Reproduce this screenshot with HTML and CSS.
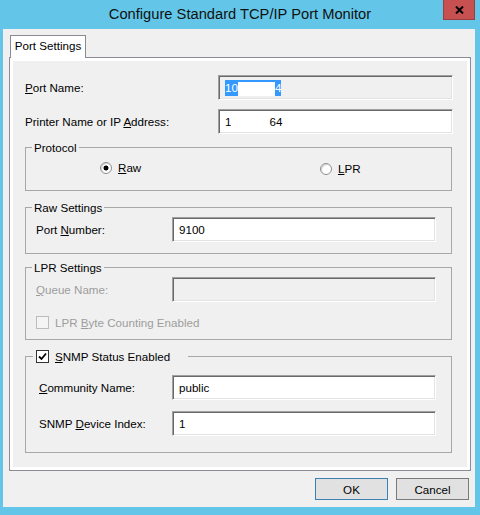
FILE: index.html
```html
<!DOCTYPE html>
<html lang="en">
<head>
  <meta charset="UTF-8">
  <title>Configure Standard TCP/IP Port Monitor</title>
  <link rel="stylesheet" href="styles.css">
</head>
<body>

<div class="window">
  <div class="titlebar">
    <span></span>
    <h1 class="title">Configure Standard TCP/IP Port Monitor</h1>
    <button class="close" aria-label="Close">
      <svg width="9" height="8" viewBox="0 0 9 8"><path d="M1 0.5 L8 7.5 M8 0.5 L1 7.5" stroke="#000" stroke-width="2"/></svg>
    </button>
  </div>

  <div class="client">
    <div class="tabs">
      <div class="tab active">Port Settings</div>
    </div>

    <div class="tab-panel">
      <div class="row first">
        <label class="lbl"><u>P</u>ort Name:</label>
        <div class="field readonly">
          <span class="sel">10<span class="blank"></span>4</span>
        </div>
      </div>
      <div class="row">
        <label class="lbl">Printer Name or IP <u>A</u>ddress:</label>
        <div class="field">1<span class="blank plain"></span>64</div>
      </div>

      <fieldset class="group protocol">
        <legend>Protocol</legend>
        <div class="radios">
          <label class="opt"><span class="radio checked"></span><span><u>R</u>aw</span></label>
          <label class="opt lpr"><span class="radio"></span><span><u>L</u>PR</span></label>
        </div>
      </fieldset>

      <fieldset class="group raw">
        <legend>Raw Settings</legend>
        <div class="grow">
          <label class="lbl">Port <u>N</u>umber:</label>
          <div class="field">9100</div>
        </div>
      </fieldset>

      <fieldset class="group lpr-settings">
        <legend>LPR Settings</legend>
        <div class="grow">
          <label class="lbl disabled"><u>Q</u>ueue Name:</label>
          <div class="field readonly"></div>
        </div>
        <label class="opt check-row disabled"><span class="check"></span><span>LPR <u>B</u>yte Counting Enabled</span></label>
      </fieldset>

      <fieldset class="group snmp">
        <legend>
          <label class="opt">
            <span class="check on">
              <svg width="9" height="9" viewBox="0 0 9 9"><path d="M1 4.5 L3.5 7 L8 1.5" fill="none" stroke="#000" stroke-width="1.8"/></svg>
            </span>
            <span><u>S</u>NMP Status Enabled</span>
          </label>
        </legend>
        <div class="grow">
          <label class="lbl"><u>C</u>ommunity Name:</label>
          <div class="field">public</div>
        </div>
        <div class="grow">
          <label class="lbl">SNMP <u>D</u>evice Index:</label>
          <div class="field">1</div>
        </div>
      </fieldset>
    </div>

    <div class="buttons">
      <button class="btn default">OK</button>
      <button class="btn">Cancel</button>
    </div>
  </div>
</div>

</body>
</html>
```

FILE: styles.css
```css
* {
  box-sizing: border-box;
}

body {
  margin: 0;
  background: #63c6e8;
  font-family: 'Liberation Sans', Arial, sans-serif;
  font-size: 11.6px;
  color: #000;
}

.window {
  width: 480px;
  height: 515px;
  display: flex;
  flex-direction: column;
}

/* title bar */
.titlebar {
  height: 29px;
  display: grid;
  grid-template-columns: 1fr auto 1fr;
  align-items: start;
}

.title {
  margin: 0;
  font-weight: normal;
  font-size: 14.7px;
  line-height: 28px;
  color: #111;
  white-space: nowrap;
}

.close {
  justify-self: end;
  margin-right: 5px;
  width: 32px;
  height: 20px;
  padding: 0;
  border: 1px solid #9a3e3e;
  border-top: none;
  background: #c75050;
  display: flex;
  align-items: center;
  justify-content: center;
}

/* dialog body */
.client {
  margin: 0 5px 0 3px;
  height: 478px;
  background: #f0f0f0;
  padding: 6px 4px 0 6px;
  display: flex;
  flex-direction: column;
}

.tabs {
  display: flex;
  height: 23px;
  margin-bottom: -1px;
  position: relative;
  z-index: 1;
}

.tab {
  width: 76px;
  height: 23px;
  margin-left: 1px;
  padding-top: 3px;
  text-align: center;
  background: #fff;
  border: 1px solid #898c95;
  border-bottom: none;
}

.tab-panel {
  height: 414px;
  border: 1px solid #898c95;
  box-shadow: inset 0 0 0 3px #fff;
  background: #f0f0f0;
  padding: 3px 17px 0 15px;
}

/* label + field rows */
.row {
  display: grid;
  grid-template-columns: 193px 1fr;
  align-items: center;
  margin-top: 9px;
}

.row.first {
  margin-top: 14px;
}

.lbl {
  white-space: nowrap;
}

.field {
  height: 25px;
  padding: 0 6px;
  display: flex;
  align-items: center;
  white-space: pre;
  background: #fff;
  border: 1px solid;
  border-color: #a0a0a0 #fff #fff #a0a0a0;
  box-shadow: inset 1px 1px 0 #696969, inset -1px -1px 0 #e3e3e3;
}

.field.readonly {
  background: #f0f0f0;
}

.sel {
  display: flex;
  align-items: flex-end;
  background: #3399ff;
  color: #fff;
  height: 16px;
  line-height: 16px;
}

.blank {
  display: inline-block;
  width: 37px;
  height: 14px;
  background: #fff;
}

.blank.plain {
  width: 38px;
}

/* group boxes */
.group {
  margin: 0 1px 0 0;
  padding: 0 15px 0 10px;
  border: 1px solid #a7a7a7;
  min-width: 0;
}

.group legend {
  margin-left: -4px;
  padding: 0 2px;
  line-height: 15px;
}

.protocol {
  margin-top: 6px;
  padding-top: 5px;
  padding-bottom: 15px;
}

.raw {
  margin-top: 9px;
  padding-top: 2px;
  padding-bottom: 11px;
}

.lpr-settings {
  margin-top: 6px;
  padding-top: 2px;
  padding-bottom: 9px;
}

.snmp {
  margin-top: 9px;
  padding-top: 11px;
  padding-bottom: 16px;
  padding-left: 13px;
}

.snmp legend {
  margin-left: -6px;
  padding: 0 18px 0 3px;
}

.grow {
  display: grid;
  grid-template-columns: 136px 1fr;
  align-items: center;
}

.snmp .grow {
  grid-template-columns: 133px 1fr;
}

.snmp .grow + .grow {
  margin-top: 11px;
}

/* radio buttons and check boxes */
.radios {
  display: grid;
  grid-template-columns: 220px auto;
  padding-left: 64px;
  height: 15px;
}

.opt {
  display: flex;
  align-items: center;
  gap: 6px;
  white-space: nowrap;
}

.opt.lpr {
  margin-top: 2px;
}

.radio {
  width: 12px;
  height: 12px;
  border-radius: 50%;
  border: 1px solid #8f8f8f;
  background: #fff;
  box-shadow: inset 1px 1px 1px #d0d0d0;
}

.radio.checked {
  background: radial-gradient(circle, #000 2.2px, #fff 2.8px);
}

.check-row {
  margin-top: 13px;
  height: 15px;
}

.check {
  width: 13px;
  height: 13px;
  border: 1px solid #333;
  background: #fff;
  display: flex;
  align-items: center;
  justify-content: center;
}

.disabled {
  color: #9d9d9d;
}

.disabled .check {
  border-color: #bcbcbc;
  background: #f4f4f4;
}

/* OK / Cancel */
.buttons {
  margin-top: 7px;
  display: flex;
  justify-content: flex-end;
  gap: 8px;
  padding-right: 2px;
}

.btn {
  width: 73px;
  height: 22px;
  padding: 0;
  font: inherit;
  color: #000;
  background: #e1e1e1;
  border: 1px solid #7a7a7a;
}

.btn.default {
  border-color: #3c7fb1;
}
```
